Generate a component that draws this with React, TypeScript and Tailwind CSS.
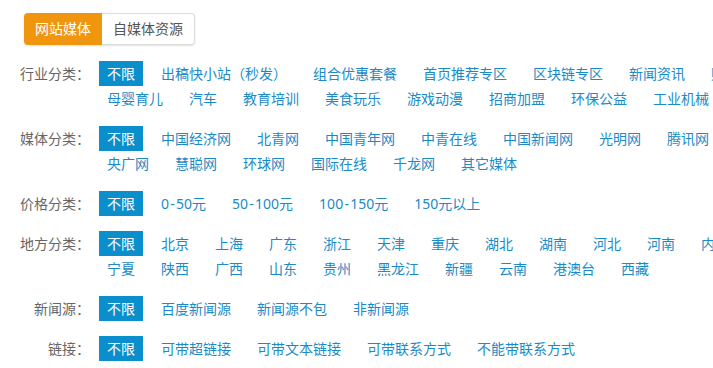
import React from "react";

type Cat = { label: string; lines: string[][] };

const cats: Cat[] = [
  {
    label: "行业分类：",
    lines: [
      ["出稿快小站（秒发）", "组合优惠套餐", "首页推荐专区", "区块链专区", "新闻资讯", "财经金融"],
      ["母婴育儿", "汽车", "教育培训", "美食玩乐", "游戏动漫", "招商加盟", "环保公益", "工业机械", "其它"],
    ],
  },
  {
    label: "媒体分类：",
    lines: [
      ["中国经济网", "北青网", "中国青年网", "中青在线", "中国新闻网", "光明网", "腾讯网"],
      ["央广网", "慧聪网", "环球网", "国际在线", "千龙网", "其它媒体"],
    ],
  },
  {
    label: "价格分类：",
    lines: [["0-50元", "50-100元", "100-150元", "150元以上"]],
  },
  {
    label: "地方分类：",
    lines: [
      ["北京", "上海", "广东", "浙江", "天津", "重庆", "湖北", "湖南", "河北", "河南", "内蒙古"],
      ["宁夏", "陕西", "广西", "山东", "贵州", "黑龙江", "新疆", "云南", "港澳台", "西藏"],
    ],
  },
  {
    label: "新闻源：",
    lines: [["百度新闻源", "新闻源不包", "非新闻源"]],
  },
  {
    label: "链接：",
    lines: [["可带超链接", "可带文本链接", "可带联系方式", "不能带联系方式"]],
  },
];

function ItemText({ t }: { t: string }) {
  if (!t.includes("-")) return <>{t}</>;
  const [a, b] = t.split("-");
  return (
    <>
      {a}
      <span className="inline-block w-[7px] text-center">-</span>
      {b}
    </>
  );
}

export default function App() {
  return (
    <div
      className="w-[713px] h-[368px] overflow-hidden bg-white text-[14px]"
      style={{ fontFamily: '"Noto Sans", "Noto Sans CJK SC", sans-serif' }}
    >
      <div className="pt-[13px] pl-[24px] flex">
        <div className="flex rounded-[4px] shadow-[0_1px_2px_rgba(0,0,0,0.12)]">
          <div className="h-[32px] px-[11px] flex items-center bg-[#f0960e] text-white rounded-l-[4px] leading-none">
            网站媒体
          </div>
          <div className="h-[32px] px-[11px] flex items-center bg-white text-[#555] border border-l-0 border-[#dcdcdc] rounded-r-[4px] leading-none">
            自媒体资源
          </div>
        </div>
      </div>
      <div className="mt-[16px] flex flex-col gap-[15px]">
        {cats.map((c) => (
          <div key={c.label} className="flex">
            <div className="w-[90px] shrink-0 text-right text-[#666] leading-[25px]">{c.label}</div>
            <div className="ml-[9px] flex flex-col">
              {c.lines.map((line, i) => (
                <div key={i} className="flex whitespace-nowrap">
                  {i === 0 && (
                    <span className="px-[8px] mr-[10px] h-[25px] leading-[25px] bg-[#0b8fcc] text-white">不限</span>
                  )}
                  {line.map((t) => (
                    <span key={t} className="px-[8px] mr-[10px] h-[25px] leading-[25px] text-[#1a8bc7] shrink-0">
                      <ItemText t={t} />
                    </span>
                  ))}
                </div>
              ))}
            </div>
          </div>
        ))}
      </div>
    </div>
  );
}
